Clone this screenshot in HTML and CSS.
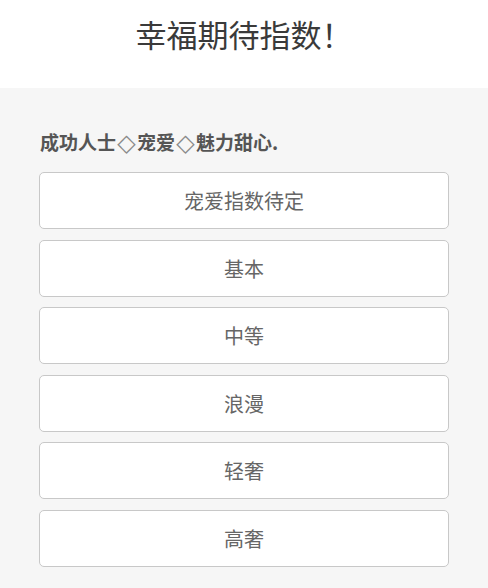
FILE: index.html
```html
<!DOCTYPE html>
<html lang="zh">
<head>
<meta charset="utf-8">
<link rel="stylesheet" href="styles.css">
</head>
<body>
<header class="header">
  <h1 class="title">幸福期待指数！</h1>
</header>
<main class="main">
  <p class="subtitle">成功人士<span class="diamond">◇</span>宠爱<span class="diamond">◇</span>魅力甜心.</p>
  <div class="options">
    <div class="option">宠爱指数待定</div>
    <div class="option">基本</div>
    <div class="option">中等</div>
    <div class="option">浪漫</div>
    <div class="option">轻奢</div>
    <div class="option">高奢</div>
  </div>
</main>
</body>
</html>
```
FILE: styles.css
```css
html, body {
  margin: 0;
  padding: 0;
  height: 100%;
}
body {
  font-family: "Noto Sans CJK SC", "Noto Sans", sans-serif;
  background: #f6f6f6;
}
.header {
  background: #ffffff;
  height: 88px;
  display: flex;
  justify-content: center;
}
.title {
  margin: 0;
  padding-top: 11px;
  font-size: 31px;
  font-weight: 400;
  line-height: 46px;
  color: #3a3a3a;
}
.main {
  padding: 0 39px 0 39px;
}
.subtitle {
  margin: 0;
  padding-top: 40px;
  padding-left: 1px;
  font-size: 19px;
  line-height: 28px;
  height: 28px;
  font-weight: 700;
  color: #555555;
}
.diamond {
  display: inline-block;
  width: 21px;
  text-align: center;
  font-family: "DejaVu Sans", sans-serif;
  font-weight: 400;
  font-size: 24px;
  line-height: 20px;
  vertical-align: -1px;
  color: #8a8a8a;
}
.options {
  display: flex;
  flex-direction: column;
  gap: 10.5px;
  margin-top: 16px;
}
.option {
  box-sizing: border-box;
  height: 57px;
  width: 410px;
  background: #ffffff;
  border: 1px solid #c8c8c8;
  border-radius: 5px;
  display: flex;
  align-items: center;
  justify-content: center;
  font-size: 20px;
  color: #666666;
}
```
